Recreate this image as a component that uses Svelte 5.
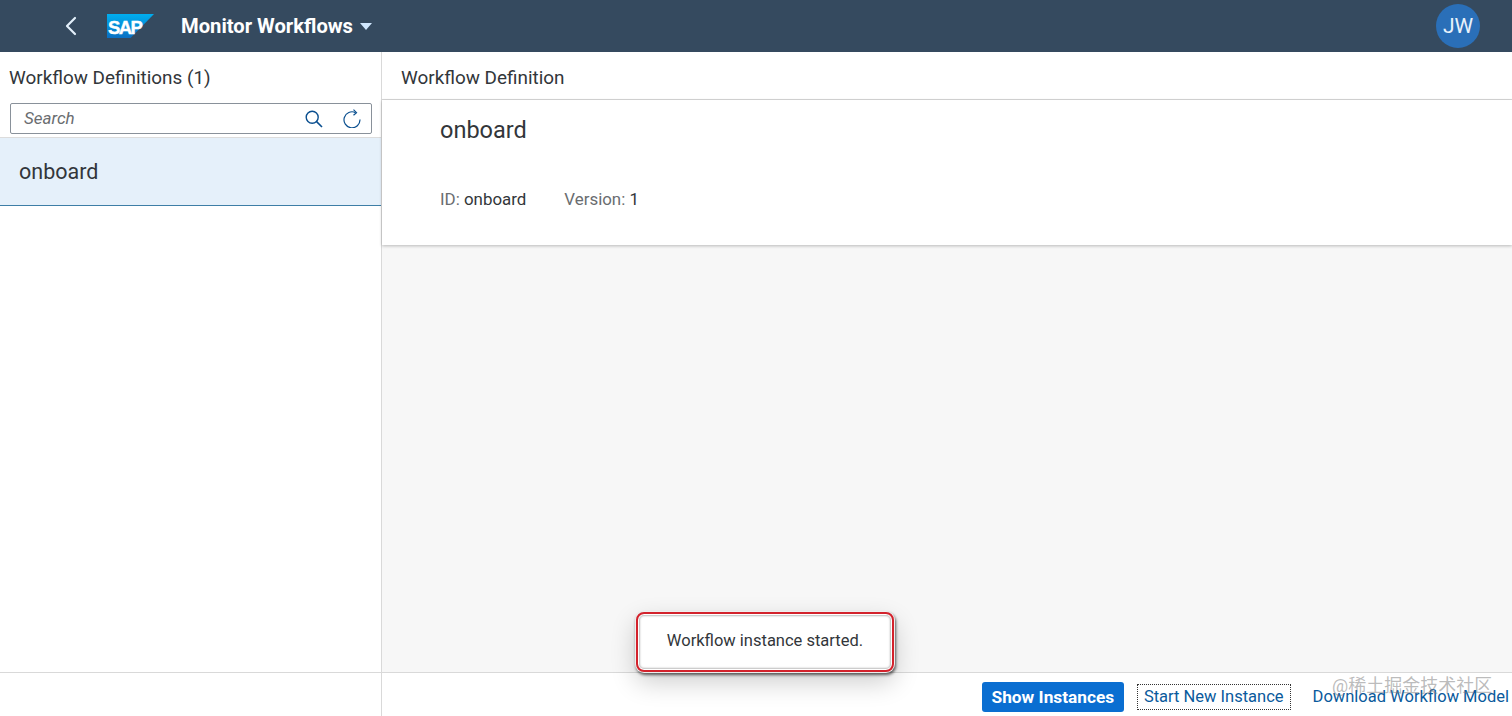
<script>
  const title = 'Monitor Workflows';
  const definitions = [{ id: 'onboard', version: 1 }];
  const current = definitions[0];
</script>

<div class="page">
  <header class="shell">
    <button class="back" aria-label="Back">
      <svg width="14" height="20" viewBox="0 0 14 20" fill="none">
        <path d="M11 2L3 10l8 8" stroke="currentColor" stroke-width="2.2" stroke-linecap="round" stroke-linejoin="round"/>
      </svg>
    </button>
    <div class="logo">
      <svg width="47" height="24" viewBox="0 0 47 24">
        <defs>
          <linearGradient id="sapBlue" x1="0" y1="0" x2="0" y2="1">
            <stop offset="0" stop-color="#00aeef"/>
            <stop offset="1" stop-color="#0a6fc2"/>
          </linearGradient>
        </defs>
        <polygon points="0,0 47,0 23.5,24 0,24" fill="url(#sapBlue)"/>
      </svg>
      <span class="logo-text">SAP</span>
    </div>
    <div class="app-title">
      {title}
      <svg width="12" height="7" viewBox="0 0 12 7"><polygon points="0,0 12,0 6,7" fill="#d1e8ff"/></svg>
    </div>
    <div class="avatar">JW</div>
  </header>

  <div class="body">
    <aside class="master">
      <div class="master-title">Workflow Definitions ({definitions.length})</div>
      <div class="search">
        <span class="placeholder">Search</span>
        <svg class="icon" width="18" height="18" viewBox="0 0 18 18" fill="none">
          <circle cx="7.2" cy="7.2" r="6" stroke="#0a4f8f" stroke-width="1.4"/>
          <path d="M11.6 11.6L17 17" stroke="#0a4f8f" stroke-width="1.6"/>
        </svg>
        <svg class="icon" width="18" height="19" viewBox="0 0 18 19" fill="none">
          <path d="M12.5 3.6A8 8 0 1 0 17 10.5" stroke="#0a4f8f" stroke-width="1.2"/>
          <path d="M10.5 0.6l3 3-3 2.6" stroke="#0a4f8f" stroke-width="1.2"/>
        </svg>
      </div>
      <div class="list">
        {#each definitions as item}
          <div class="item">{item.id}</div>
        {/each}
      </div>
      <div class="master-footer"></div>
    </aside>

    <main class="detail">
      <div class="detail-title">Workflow Definition</div>
      <section class="object">
        <h1>{current.id}</h1>
        <div class="attrs">
          <span><span class="label">ID:</span> {current.id}</span>
          <span><span class="label">Version:</span> {current.version}</span>
        </div>
      </section>
      <div class="content"></div>
      <footer class="actions">
        <button class="primary">Show Instances</button>
        <button class="ghost focused">Start New Instance</button>
        <button class="ghost">Download Workflow Model</button>
      </footer>
    </main>
  </div>

  <div class="toast">Workflow instance started.</div>
  <div class="watermark">@稀土掘金技术社区</div>
</div>

<style>
  :global(body) {
    margin: 0;
    background: #fff;
  }

  .page {
    position: relative;
    display: flex;
    flex-direction: column;
    width: 1512px;
    height: 716px;
    overflow: hidden;
    font-family: Roboto, "Noto Sans", sans-serif;
    color: #32363a;
  }

  .shell {
    display: flex;
    align-items: center;
    flex: none;
    height: 52px;
    padding: 0 32px 0 64px;
    box-sizing: border-box;
    background: #354a5f;
    color: #fff;
  }

  .back {
    display: flex;
    padding: 0;
    border: none;
    background: none;
    color: #e3f0fb;
  }

  .logo {
    position: relative;
    width: 47px;
    height: 24px;
    margin-left: 29px;
  }

  .logo svg {
    display: block;
  }

  .logo-text {
    position: absolute;
    left: 1px;
    top: 2px;
    font-family: "Liberation Sans", sans-serif;
    font-size: 18.5px;
    line-height: 24px;
    font-weight: 700;
    letter-spacing: -1.6px;
    -webkit-text-stroke: 0.4px #fff;
    color: #fff;
  }

  .app-title {
    display: flex;
    align-items: center;
    gap: 7px;
    margin-left: 27px;
    font-size: 20.2px;
    font-weight: 700;
  }

  .avatar {
    display: flex;
    align-items: center;
    justify-content: center;
    width: 44px;
    height: 44px;
    margin-left: auto;
    border-radius: 50%;
    background: #2a6fb8;
    color: #e8f2fb;
    font-size: 21px;
  }

  .body {
    display: flex;
    flex: 1;
    min-height: 0;
  }

  .master {
    display: flex;
    flex-direction: column;
    flex: none;
    width: 382px;
    box-sizing: border-box;
    border-right: 1px solid #d9d9d9;
  }

  .master-title {
    padding: 14px 9px 0;
    height: 37px;
    font-size: 18.9px;
    line-height: 24px;
    color: #32363a;
  }

  .search {
    display: flex;
    align-items: center;
    gap: 20px;
    height: 31px;
    margin: 0 9px 0 10px;
    padding: 0 10px 0 13px;
    box-sizing: border-box;
    border: 1px solid #89919a;
    border-radius: 2px;
    background: #fff;
  }

  .placeholder {
    flex: 1;
    padding-bottom: 2px;
    font-size: 17px;
    font-style: italic;
    color: #6a6d70;
  }

  .icon {
    flex: none;
  }

  .list {
    flex: 1;
    margin-top: 3px;
  }

  .item {
    display: flex;
    align-items: center;
    height: 69px;
    padding-left: 19px;
    box-sizing: border-box;
    border-top: 1px solid #dcdcdc;
    border-bottom: 1px solid #3d7ea6;
    background: #e5f0fa;
    font-size: 21.5px;
  }

  .master-footer {
    flex: none;
    height: 44px;
    box-sizing: border-box;
    border-top: 1px solid #d9d9d9;
  }

  .detail {
    display: flex;
    flex-direction: column;
    flex: 1;
    min-width: 0;
  }

  .detail-title {
    flex: none;
    height: 48px;
    padding-left: 19px;
    box-sizing: border-box;
    border-bottom: 1px solid #d9d9d9;
    font-size: 18.9px;
    line-height: 52px;
  }

  .object {
    position: relative;
    flex: none;
    height: 145px;
    padding: 14px 58px 0;
    box-sizing: border-box;
    background: #fff;
    box-shadow: 0 1px 3px rgba(0, 0, 0, 0.25);
  }

  h1 {
    margin: 0;
    font-size: 23.5px;
    line-height: 32px;
    font-weight: 400;
  }

  .attrs {
    display: flex;
    gap: 38px;
    margin-top: 42px;
    font-size: 16.9px;
    line-height: 22px;
  }

  .label {
    color: #6a6d70;
  }

  .content {
    flex: 1;
    background: #f7f7f7;
  }

  .actions {
    display: flex;
    align-items: center;
    justify-content: flex-end;
    flex: none;
    height: 44px;
    padding: 4px 3px 0 0;
    box-sizing: border-box;
    border-top: 1px solid #d9d9d9;
    background: #fff;
  }

  button {
    font-family: inherit;
  }

  .primary {
    height: 30px;
    width: 142px;
    margin-right: 13px;
    padding: 0;
    border: none;
    border-radius: 3px;
    background: #0a6ed1;
    color: #fff;
    font-size: 17.3px;
    font-weight: 700;
  }

  .ghost {
    height: 26px;
    padding: 0 6px;
    border: 1px solid transparent;
    background: none;
    color: #0a5a9c;
    font-size: 16.5px;
    white-space: nowrap;
  }

  .focused {
    margin-right: 22px;
    border: 1px dotted #333;
  }

  .actions .ghost:last-child {
    padding: 0;
    border: none;
  }

  .toast {
    position: absolute;
    left: 636px;
    top: 612px;
    width: 258px;
    height: 60px;
    box-sizing: border-box;
    border: 2px solid #d3222c;
    border-radius: 8px;
    background: #fff;
    box-shadow:
      inset 0 0 0 1px #fff,
      inset 0 0 2px 2px #bbb,
      0 0 0 1px #eee,
      1px 2px 3px 1px rgba(0, 0, 0, 0.6),
      0 10px 26px rgba(0, 0, 0, 0.2);
    font-size: 16.5px;
    line-height: 53px;
    text-align: center;
    color: #32363a;
  }

  .watermark {
    position: absolute;
    left: 1332px;
    top: 674px;
    font-family: Roboto, "Noto Sans CJK SC", sans-serif;
    font-size: 18px;
    line-height: 24px;
    color: rgba(130, 130, 130, 0.55);
    white-space: nowrap;
  }
</style>
